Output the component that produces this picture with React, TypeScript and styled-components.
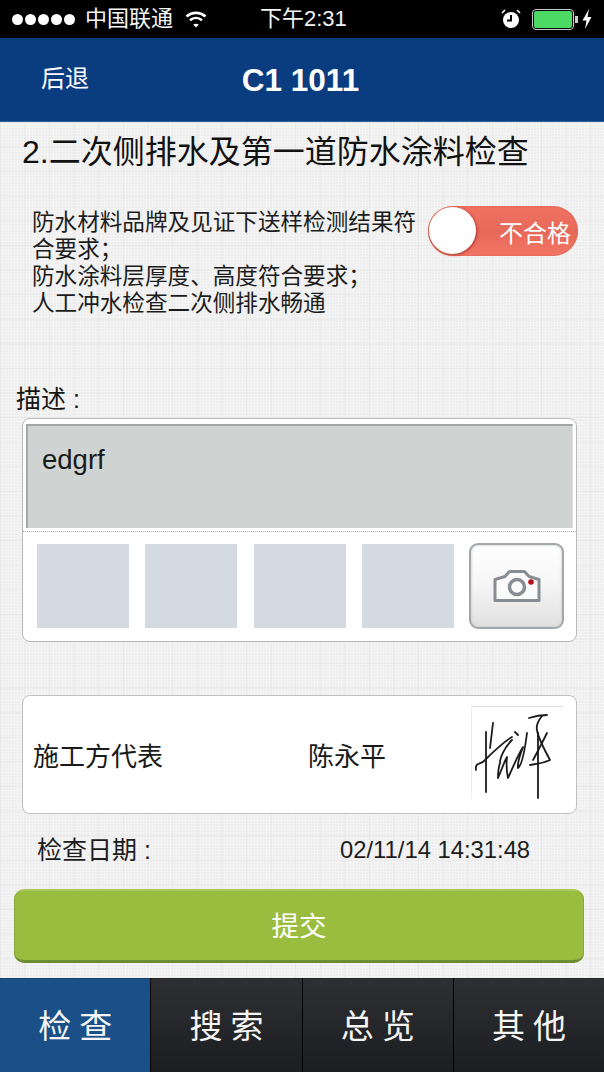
import React from "react";
import styled, { createGlobalStyle } from "styled-components";

const Global = createGlobalStyle`
  html, body { margin: 0; padding: 0; background: #f2f2f2; }
  * { box-sizing: border-box; }
  body { font-family: "Liberation Sans", "Noto Sans CJK SC", sans-serif; }
`;

const Screen = styled.div`
  width: 604px;
  height: 1072px;
  display: flex;
  flex-direction: column;
  overflow: hidden;
`;

const StatusBar = styled.div`
  height: 38px;
  background: #000;
  color: #f4f4f4;
  display: grid;
  grid-template-columns: 1fr 1fr;
  align-items: center;
  position: relative;
  padding: 0 12px 0 12px;
  font-size: 22px;
`;
const StatusLeft = styled.div`
  display: flex;
  align-items: center;
`;
const Dots = styled.div`
  display: flex;
  gap: 2px;
  margin-right: 10px;
`;
const Dot = styled.span`
  width: 11px;
  height: 11px;
  border-radius: 50%;
  background: #fff;
`;
const Carrier = styled.span`
  margin-right: 12px;
  line-height: 38px;
`;
const Time = styled.span`
  position: absolute;
  left: 260px;
  top: 0;
  line-height: 38px;
`;
const StatusRight = styled.div`
  display: flex;
  align-items: center;
  justify-content: flex-end;
  gap: 11px;
`;
const Battery = styled.div`
  width: 42px;
  height: 21px;
  border: 1px solid #c9c9c9;
  border-radius: 4px;
  padding: 1px;
  position: relative;
  &::after {
    content: "";
    position: absolute;
    right: -5px;
    top: 6px;
    width: 3px;
    height: 7px;
    background: #ccc;
  }
`;
const BatteryFill = styled.div`
  height: 100%;
  background: #4cd964;
  border-radius: 2px;
`;
const BatteryGroup = styled.div`
  display: flex;
  align-items: center;
  gap: 8px;
`;

const NavBar = styled.header`
  height: 84px;
  background: #0a3d7f;
  border-bottom: 1px solid #2b5f9a;
  display: flex;
  align-items: center;
  position: relative;
  color: #fff;
  padding: 0 0 1px 41px;
`;
const Back = styled.span`
  font-size: 24px;
  line-height: 1;
`;
const NavTitle = styled.h1`
  position: absolute;
  left: 0;
  right: 0;
  top: 0;
  margin: 0;
  padding-right: 3px;
  text-align: center;
  font-size: 31.500px;
  line-height: 84px;
  font-weight: 700;
`;

const Main = styled.main`
  flex: 1;
  min-height: 0;
  background-color: #f4f4f4;
  background-image:
    linear-gradient(#e9e9e9 1px, transparent 1px),
    linear-gradient(90deg, #e9e9e9 1px, transparent 1px),
    radial-gradient(circle at 1px 1px, #e6e6e6 0.6px, transparent 0.8px);
  background-size: 24.600px 24.600px, 24.600px 24.600px, 3px 3px;
  display: flex;
  flex-direction: column;
  padding-top: 10px;
`;
const Title = styled.h2`
  margin: 0 0 0 22px;
  font-size: 32px;
  font-weight: 400;
  line-height: 40px;
  color: #111;
`;
const CheckRow = styled.section`
  display: flex;
  align-items: flex-start;
  margin-top: 34px;
  padding-left: 32px;
`;
const CheckText = styled.p`
  width: 396px;
  margin: 3px 0 0;
  font-size: 22.600px;
  line-height: 27px;
  color: #1c1c1c;
`;
const Toggle = styled.div`
  width: 150px;
  height: 50px;
  border-radius: 25px;
  background: linear-gradient(#f27263, #e5695a 50%, #f47566);
  display: flex;
  align-items: center;
  position: relative;
  padding: 1px 7px 0 0;
  justify-content: flex-end;
  color: #fff;
  font-size: 24px;
  box-shadow: inset 0 0 2px #c55b40;
`;
const Knob = styled.span`
  position: absolute;
  left: 1px;
  top: 1px;
  width: 47px;
  height: 47px;
  border-radius: 50%;
  background: #fff;
  box-shadow: 1px 1px 3px #a93a2b;
`;
const FieldLabel = styled.div`
  margin: 67px 0 0 16px;
  font-size: 25px;
  line-height: 30px;
  color: #151515;
`;
const DescCard = styled.section`
  margin: 4px 0 0 22px;
  width: 555px;
  height: 224px;
  background: #fff;
  border: 1px solid #b6b9bd;
  border-radius: 8px;
  padding-top: 5px;
  display: flex;
  flex-direction: column;
`;
const DescInput = styled.div`
  margin: 0 3px;
  height: 104px;
  background: #cfd4d3;
  border-top: 2px solid #a3a7a6;
  border-left: 2px solid #a3a7a6;
  border-right: 1px solid #dfe2e1;
  padding: 18px 14px;
  font-size: 27.500px;
  line-height: 32px;
  color: #1a1a1a;
`;
const PhotoRow = styled.div`
  margin-top: 3px;
  border-top: 1px dotted #a9a9a9;
  display: flex;
  align-items: flex-start;
  padding: 12px 0 0 14px;
`;
const Thumb = styled.div`
  width: 92px;
  height: 84px;
  background: #d3dae2;
  margin-right: 16.400px;
`;
const CameraButton = styled.div`
  width: 95px;
  height: 86px;
  margin: -1px 0 0 -2px;
  padding-left: 1px;
  border: 2px solid #a2a7ab;
  border-radius: 9px;
  background: linear-gradient(#fff, #f7f7f7 45%, #e0e0e0);
  box-shadow: inset 0 0 3px #c4c4c4;
  display: flex;
  align-items: center;
  justify-content: center;
`;
const SignerCard = styled.section`
  margin: 53px 0 0 22px;
  width: 555px;
  height: 119px;
  background: #fff;
  border: 1px solid #bcbfc3;
  border-radius: 8px;
  display: flex;
  align-items: center;
  padding: 0 0 0 10px;
  font-size: 26px;
  color: #1a1a1a;
`;
const Role = styled.span`
  width: 275px;
`;
const Person = styled.span`
  width: 163px;
`;
const SignatureBox = styled.div`
  width: 92px;
  height: 93px;
  margin-top: -4px;
  border-top: 1px solid #dcdcdc;
  border-left: 1px solid #eeeeee;
`;
const DateRow = styled.div`
  margin: 20px 0 0 37px;
  display: flex;
  align-items: center;
  color: #1c1c1c;
  line-height: 32px;
`;
const DateLabel = styled.span`
  width: 303px;
  font-size: 25px;
`;
const DateValue = styled.span`
  font-size: 23.800px;
`;
const Submit = styled.button`
  margin: 23px 0 0 14px;
  width: 570px;
  height: 74px;
  padding: 0 0 4px;
  border: 0;
  border-radius: 10px;
  background: #9abd40;
  border-top: 2px solid #a9c85d;
  border-bottom: 3px solid #6f8c33;
  box-shadow: inset 1px 0 0 #88a83a, inset -1px 0 0 #88a83a;
  color: #fff;
  font: 400 27.500px "Liberation Sans", "Noto Sans CJK SC", sans-serif;
`;
const TabBar = styled.nav`
  height: 94px;
  background: #000;
  display: grid;
  grid-template-columns: repeat(4, 1fr);
  gap: 1px;
`;
const Tab = styled.div<{ $active?: boolean }>`
  background: ${(p) =>
    p.$active ? "#1a4f88" : "linear-gradient(#2f3034, #1c1d20)"};
  box-shadow: inset 0 1px 0 ${(p) => (p.$active ? "#17406f" : "#26272a")};
  color: #f5f5f5;
  display: flex;
  align-items: center;
  justify-content: center;
  font-size: 33px;
  letter-spacing: 8px;
  padding: 0 0 2px 8px;
`;

const Wifi = () => (
  <svg width="22" height="18" viewBox="0 0 22 18" fill="none" stroke="#fff" strokeWidth="2.600">
    <path d="M1.500 6.500C7 1.600 15 1.600 20.500 6.500" />
    <path d="M5 10.200c3.600-3 8.400-3 12 0" />
    <path d="M11 17.600l2.800-3c-1.700-1.100-3.900-1.100-5.600 0z" fill="#fff" stroke="none" />
  </svg>
);
const Alarm = () => (
  <svg width="20" height="20" viewBox="0 0 20 20">
    <circle cx="10" cy="11" r="8" fill="#fff" />
    <path d="M10 6V11.500H6" fill="none" stroke="#000" strokeWidth="2" />
    <path d="M1 4 4 1M19 4 16 1" stroke="#fff" strokeWidth="1.600" />
  </svg>
);
const Bolt = () => (
  <svg width="10" height="20" viewBox="0 0 10 20">
    <path d="M7 0 .5 11.500H4.500L3 20 9.500 8H5.500z" fill="#fff" />
  </svg>
);
const Camera = () => (
  <svg width="48" height="34" viewBox="0 0 48 34">
    <path
      d="M2 10.500 12 7.500 16.500 2.500H31.500L36 7.500 46 10.500V31.500H2z"
      fill="#fbfbfb"
      stroke="#878d93"
      strokeWidth="3"
      strokeLinejoin="round"
    />
    <circle cx="24" cy="18" r="7.500" fill="none" stroke="#878d93" strokeWidth="3.500" />
    <circle cx="38" cy="13" r="2.800" fill="#b5121b" />
  </svg>
);
const Signature = () => (
  <svg width="90" height="92" viewBox="0 0 90 92" fill="none" stroke="#1b1b1b" strokeWidth="1.800" strokeLinecap="round" strokeLinejoin="round">
    <path d="M14 25V85" />
    <path d="M21 16 18 41" />
    <path d="M4 63C3 55 8 58 12 54C22 44 30 36 40 30" />
    <path d="M43 25 46 28" />
    <path d="M40 33C33 40 28 50 28 56C26 62 26 68 26 71C30 62 32 55 35 50C34 58 35 66 36 71C40 62 46 48 51 40C48 48 45 56 46 61C50 58 53 42 55 26" />
    <path d="M57 11C63 9 70 8 75 8" />
    <path d="M70 9C66 14 64 19 65 23C66 30 72 42 78 53C72 56 65 57 58 58" />
    <path d="M75 26C70 36 65 46 61 53" />
    <path d="M66 26V91" />
  </svg>
);

export default function App() {
  return (
    <Screen>
      <Global />
      <StatusBar>
        <StatusLeft>
          <Dots>
            <Dot /><Dot /><Dot /><Dot /><Dot />
          </Dots>
          <Carrier>中国联通</Carrier>
          <Wifi />
        </StatusLeft>
        <Time>下午2:31</Time>
        <StatusRight>
          <Alarm />
          <BatteryGroup>
            <Battery>
              <BatteryFill />
            </Battery>
            <Bolt />
          </BatteryGroup>
        </StatusRight>
      </StatusBar>
      <NavBar>
        <Back>后退</Back>
        <NavTitle>C1 1011</NavTitle>
      </NavBar>
      <Main>
        <Title>2.二次侧排水及第一道防水涂料检查</Title>
        <CheckRow>
          <CheckText>
            防水材料品牌及见证下送样检测结果符合要求；
            <br />
            防水涂料层厚度、高度符合要求；
            <br />
            人工冲水检查二次侧排水畅通
          </CheckText>
          <Toggle>
            <Knob />
            不合格
          </Toggle>
        </CheckRow>
        <FieldLabel>描述 :</FieldLabel>
        <DescCard>
          <DescInput>edgrf</DescInput>
          <PhotoRow>
            <Thumb />
            <Thumb />
            <Thumb />
            <Thumb />
            <CameraButton>
              <Camera />
            </CameraButton>
          </PhotoRow>
        </DescCard>
        <SignerCard>
          <Role>施工方代表</Role>
          <Person>陈永平</Person>
          <SignatureBox>
            <Signature />
          </SignatureBox>
        </SignerCard>
        <DateRow>
          <DateLabel>检查日期 :</DateLabel>
          <DateValue>02/11/14 14:31:48</DateValue>
        </DateRow>
        <Submit>提交</Submit>
      </Main>
      <TabBar>
        <Tab $active>检查</Tab>
        <Tab>搜索</Tab>
        <Tab>总览</Tab>
        <Tab>其他</Tab>
      </TabBar>
    </Screen>
  );
}
